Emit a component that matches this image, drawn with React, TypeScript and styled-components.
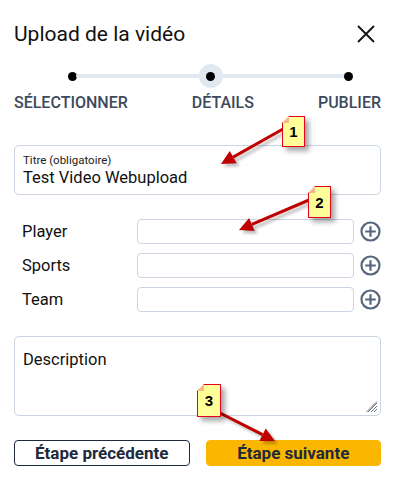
import React from "react";
import styled, { createGlobalStyle } from "styled-components";

const Global = createGlobalStyle`
  html, body { margin: 0; padding: 0; background: #fff; }
  body { font-family: Roboto, "Noto Sans", Arial, sans-serif; color: #111; }
  * { box-sizing: border-box; }
`;

const Page = styled.div`
  position: relative;
  width: 394px;
  height: 483px;
  padding: 22px 13px 0 14px;
  display: flex;
  flex-direction: column;
  overflow: hidden;
`;

const Header = styled.div`
  display: flex;
  align-items: center;
  justify-content: space-between;
  height: 24px;
`;

const Title = styled.h1`
  margin: 0;
  font-size: 21px;
  line-height: 24px;
  font-weight: 400;
  color: #111;
`;

const CloseBtn = styled.button`
  border: 0;
  background: none;
  padding: 0;
  width: 22px;
  height: 22px;
  margin-right: 4px;
  display: flex;
  align-items: center;
  justify-content: center;
`;

const Stepper = styled.div`
  margin-top: 18px;
  display: flex;
  flex-direction: column;
`;

const Track = styled.div`
  height: 24px;
  display: flex;
  align-items: center;
  padding: 0 28px 0 54px;
`;

const Dot = styled.div<{ $active?: boolean }>`
  flex: none;
  width: ${(p) => (p.$active ? 24 : 9)}px;
  height: ${(p) => (p.$active ? 24 : 9)}px;
  border-radius: 50%;
  display: flex;
  align-items: center;
  justify-content: center;
  background: ${(p) => (p.$active ? "#e2e8f0" : "#000")};
  &::after {
    content: "";
    display: ${(p) => (p.$active ? "block" : "none")};
    width: 9px;
    height: 9px;
    border-radius: 50%;
    background: #000;
  }
`;

const Line = styled.div`
  flex: 1;
  height: 4px;
  background: #e2e8f0;
  border-radius: 2px;
  margin: 0 -1px;
`;

const StepLabels = styled.div`
  margin-top: 6px;
  display: flex;
  justify-content: space-between;
  font-size: 16px;
  font-weight: 500;
  line-height: 18px;
  color: #3d4a5c;
`;

const StepLabel = styled.span``;

const TitleBox = styled.div`
  margin-top: 33px;
  height: 50px;
  border: 1px solid #cbd5e1;
  border-radius: 5px;
  padding: 7px 8px 0 8px;
  display: flex;
  flex-direction: column;
`;

const SmallLabel = styled.span`
  font-size: 11.5px;
  line-height: 15px;
  color: #222;
`;

const Value = styled.span`
  font-size: 16.5px;
  line-height: 20px;
  color: #111;
`;

const Rows = styled.div`
  margin-top: 24px;
  display: flex;
  flex-direction: column;
  gap: 9px;
`;

const Row = styled.div`
  display: flex;
  align-items: center;
  height: 25px;
`;

const RowLabel = styled.span`
  width: 123px;
  padding-left: 8px;
  font-size: 16.5px;
  color: #111;
`;

const RowInput = styled.div`
  width: 217px;
  height: 25px;
  border: 1px solid #cbd5e1;
  border-radius: 4px;
`;

const PlusBtn = styled.button`
  border: 0;
  background: none;
  padding: 0;
  margin-left: 6px;
  width: 21px;
  height: 21px;
  display: flex;
  align-items: center;
  justify-content: center;
`;

const Desc = styled.div`
  position: relative;
  margin-top: 24px;
  height: 80px;
  border: 1px solid #cbd5e1;
  border-radius: 5px;
  padding: 13px 8px;
  font-size: 16.5px;
  line-height: 20px;
  color: #111;
`;

const Grip = styled.svg`
  position: absolute;
  right: 2px;
  bottom: 2px;
`;

const Buttons = styled.div`
  margin-top: 24px;
  display: flex;
  gap: 16px;
`;

const Btn = styled.button<{ $primary?: boolean }>`
  flex: 1;
  height: 26px;
  border-radius: 4px;
  border: 1px solid ${(p) => (p.$primary ? "#fbb700" : "#1e293b")};
  background: ${(p) => (p.$primary ? "#fbb700" : "#fff")};
  color: #1e293b;
  font-family: Roboto, Arial, sans-serif;
  font-weight: 700;
  font-size: 17px;
  line-height: 20px;
  padding: 0;
`;

const Overlay = styled.svg`
  position: absolute;
  left: 0;
  top: 0;
  pointer-events: none;
`;

const Note = styled.div<{ $x: number; $y: number; $w: number; $h: number }>`
  position: absolute;
  left: ${(p) => p.$x}px;
  top: ${(p) => p.$y}px;
  width: ${(p) => p.$w}px;
  height: ${(p) => p.$h}px;
  background: #ffff99;
  border: 1px solid #e8001c;
  box-shadow: 4px 4px 5px rgba(0, 0, 0, 0.35);
  font-family: "Liberation Sans", Arial, sans-serif;
  font-weight: 700;
  font-size: 15px;
  color: #000;
  display: flex;
  align-items: center;
  justify-content: center;
  &::before {
    content: "";
    position: absolute;
    left: -1px;
    top: -1px;
    width: 0;
    height: 0;
    border-style: solid;
    border-width: 7px 7px 0 0;
    border-color: #ffffff transparent transparent transparent;
  }
  &::after {
    content: "";
    position: absolute;
    left: -1px;
    top: -1px;
    width: 0;
    height: 0;
    border-style: solid;
    border-width: 0 0 7px 7px;
    border-color: transparent transparent #f6b58a transparent;
  }
`;

const PlusIcon = () => (
  <svg width="21" height="21" viewBox="0 0 21 21">
    <circle cx="10.5" cy="10.5" r="9" fill="none" stroke="#56667d" strokeWidth="2.2" />
    <path d="M10.5 5.2v10.6M5.2 10.5h10.6" stroke="#56667d" strokeWidth="2.2" />
  </svg>
);

const Arrow = ({ x1, y1, x2, y2 }: { x1: number; y1: number; x2: number; y2: number }) => {
  const dx = x2 - x1;
  const dy = y2 - y1;
  const len = Math.hypot(dx, dy);
  const ux = dx / len;
  const uy = dy / len;
  const hl = 14;
  const hw = 7;
  const bx = x2 - ux * hl;
  const by = y2 - uy * hl;
  const px = -uy;
  const py = ux;
  const head = `${x2},${y2} ${bx + px * hw},${by + py * hw} ${bx - px * hw},${by - py * hw}`;
  return (
    <g>
      <g transform="translate(3,3)" opacity="0.25" filter="url(#blur)">
        <line x1={x1} y1={y1} x2={bx} y2={by} stroke="#000" strokeWidth="3" />
        <polygon points={head} fill="#000" />
      </g>
      <line x1={x1} y1={y1} x2={bx} y2={by} stroke="#c00000" strokeWidth="3" />
      <polygon points={head} fill="#c00000" />
    </g>
  );
};

const steps = ["SÉLECTIONNER", "DÉTAILS", "PUBLIER"];
const fields = ["Player", "Sports", "Team"];

export default function App() {
  return (
    <>
      <Global />
      <Page>
        <Header>
          <Title>Upload de la vidéo</Title>
          <CloseBtn aria-label="Fermer">
            <svg width="20" height="20" viewBox="0 0 20 20">
              <path d="M2 2L18 18M18 2L2 18" stroke="#111" strokeWidth="1.8" />
            </svg>
          </CloseBtn>
        </Header>

        <Stepper>
          <Track>
            <Dot />
            <Line />
            <Dot $active />
            <Line />
            <Dot />
          </Track>
          <StepLabels>
            {steps.map((s) => (
              <StepLabel key={s}>{s}</StepLabel>
            ))}
          </StepLabels>
        </Stepper>

        <TitleBox>
          <SmallLabel>Titre (obligatoire)</SmallLabel>
          <Value>Test Video Webupload</Value>
        </TitleBox>

        <Rows>
          {fields.map((f) => (
            <Row key={f}>
              <RowLabel>{f}</RowLabel>
              <RowInput />
              <PlusBtn aria-label={`Ajouter ${f}`}>
                <PlusIcon />
              </PlusBtn>
            </Row>
          ))}
        </Rows>

        <Desc>
          Description
          <Grip width="12" height="12" viewBox="0 0 12 12">
            <path d="M11 2L2 11M11 5L5 11M11 8L8 11M11 0.5L0.5 11" stroke="#777" strokeWidth="1" />
          </Grip>
        </Desc>

        <Buttons>
          <Btn>Étape précédente</Btn>
          <Btn $primary>Étape suivante</Btn>
        </Buttons>

        <Overlay width="394" height="483" viewBox="0 0 394 483">
          <defs>
            <filter id="blur" x="-20%" y="-20%" width="140%" height="140%">
              <feGaussianBlur stdDeviation="1.5" />
            </filter>
          </defs>
          <Arrow x1={283} y1={129} x2={221} y2={164} />
          <Arrow x1={309} y1={200} x2={239} y2={230} />
          <Arrow x1={220} y1={413} x2={275} y2={441} />
        </Overlay>
        <Note $x={282} $y={116} $w={23} $h={31}>1</Note>
        <Note $x={308} $y={186} $w={23} $h={32}>2</Note>
        <Note $x={197} $y={384} $w={24} $h={33}>3</Note>
      </Page>
    </>
  );
}
